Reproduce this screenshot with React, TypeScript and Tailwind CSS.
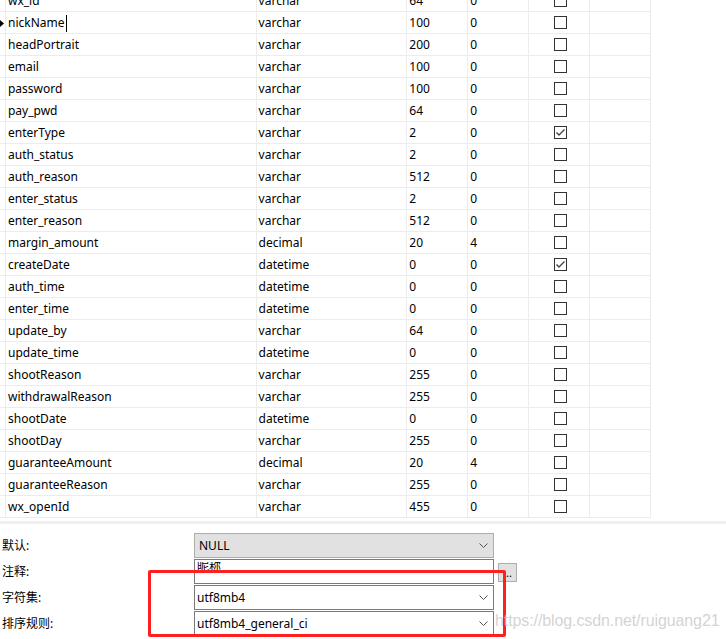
import React from "react";

interface Column {
  name: string;
  type: string;
  length: string;
  decimals: string;
  notNull?: boolean;
}

const columns: Column[] = [
  { name: "wx_id", type: "varchar", length: "64", decimals: "0" },
  { name: "nickName", type: "varchar", length: "100", decimals: "0" },
  { name: "headPortrait", type: "varchar", length: "200", decimals: "0" },
  { name: "email", type: "varchar", length: "100", decimals: "0" },
  { name: "password", type: "varchar", length: "100", decimals: "0" },
  { name: "pay_pwd", type: "varchar", length: "64", decimals: "0" },
  { name: "enterType", type: "varchar", length: "2", decimals: "0", notNull: true },
  { name: "auth_status", type: "varchar", length: "2", decimals: "0" },
  { name: "auth_reason", type: "varchar", length: "512", decimals: "0" },
  { name: "enter_status", type: "varchar", length: "2", decimals: "0" },
  { name: "enter_reason", type: "varchar", length: "512", decimals: "0" },
  { name: "margin_amount", type: "decimal", length: "20", decimals: "4" },
  { name: "createDate", type: "datetime", length: "0", decimals: "0", notNull: true },
  { name: "auth_time", type: "datetime", length: "0", decimals: "0" },
  { name: "enter_time", type: "datetime", length: "0", decimals: "0" },
  { name: "update_by", type: "varchar", length: "64", decimals: "0" },
  { name: "update_time", type: "datetime", length: "0", decimals: "0" },
  { name: "shootReason", type: "varchar", length: "255", decimals: "0" },
  { name: "withdrawalReason", type: "varchar", length: "255", decimals: "0" },
  { name: "shootDate", type: "datetime", length: "0", decimals: "0" },
  { name: "shootDay", type: "varchar", length: "255", decimals: "0" },
  { name: "guaranteeAmount", type: "decimal", length: "20", decimals: "4" },
  { name: "guaranteeReason", type: "varchar", length: "255", decimals: "0" },
  { name: "wx_openId", type: "varchar", length: "455", decimals: "0" },
];

function Checkbox({ checked }: { checked?: boolean }) {
  return (
    <div className="w-[13px] h-[13px] border border-[#333] bg-white flex items-center justify-center">
      {checked && (
        <svg width="11" height="11" viewBox="0 0 11 11">
          <polyline
            points="1.5,5.5 4,8 9.5,2.5"
            fill="none"
            stroke="#444"
            strokeWidth="1.4"
          />
        </svg>
      )}
    </div>
  );
}

function Chevron() {
  return (
    <svg width="9" height="5" viewBox="0 0 9 5" className="shrink-0">
      <polyline points="0.5,0.5 4.5,4.5 8.5,0.5" fill="none" stroke="#555" strokeWidth="1" />
    </svg>
  );
}

function Row({ col, index }: { col: Column; index: number }) {
  const active = index === 1;
  return (
    <div className="flex h-[22px] w-[651px] border-b border-[#ececec]">
      <div className="w-[6px] border-r border-[#ececec] flex items-center pt-px">
        {active && (
          <svg width="4" height="7" viewBox="0 0 4 7">
            <polygon points="0,0 4,3.5 0,7" fill="#000" />
          </svg>
        )}
      </div>
      <div className="w-[251px] border-r border-[#ececec] pl-[2px] pt-px flex items-center">
        <span>{col.name}</span>
        {active && <span className="ml-[1px] w-px h-[17px] bg-black" />}
      </div>
      <div className="w-[151px] border-r border-[#ececec] pl-[2px] pt-px flex items-center">{col.type}</div>
      <div className="w-[61px] border-r border-[#ececec] pl-[2px] pt-px flex items-center">{col.length}</div>
      <div className="w-[61px] border-r border-[#ececec] pl-[2px] pt-px flex items-center">{col.decimals}</div>
      <div className="w-[61px] border-r border-[#ececec] flex items-center justify-center pl-[2px]">
        <Checkbox checked={col.notNull} />
      </div>
      <div className="w-[61px] border-r border-[#ececec]" />
    </div>
  );
}

export default function App() {
  return (
    <div className="relative w-[726px] h-[639px] overflow-hidden bg-white text-black text-[12px] font-['Noto_Sans','Noto_Sans_CJK_SC',sans-serif]">
      <div className="-mt-[10px]">
        {columns.map((col, i) => (
          <Row key={col.name} col={col} index={i} />
        ))}
      </div>
      <div className="h-[3px]" />
      <div className="h-[3px] bg-[#f0f0f0]" />

      <div className="pt-[9px] flex flex-col gap-[1px]">
        <div className="flex items-center h-[25px]">
          <div className="w-[194px] pl-[2px]">默认:</div>
          <div className="w-[300px] h-[25px] border border-[#adadad] bg-[#e1e1e1] flex items-center justify-between pl-[4px] pr-[5px]">
            <span>NULL</span>
            <Chevron />
          </div>
        </div>
        <div className="flex items-center h-[25px]">
          <div className="w-[194px] pl-[2px]">注释:</div>
          <div className="w-[300px] h-[25px] border border-[#7a7a7a] bg-white relative overflow-hidden">
            <div className="absolute left-[2px] right-0 top-[2px] bottom-0 overflow-hidden">
              <div className="-mt-[4px] leading-[18px]">昵称</div>
            </div>
          </div>
          <div className="ml-[4px] mt-[2px] w-[19px] h-[19px] border border-[#adadad] bg-[#e1e1e1] flex items-end justify-center leading-[12px] text-[11px] pb-[2px]">
            ...
          </div>
        </div>
        <div className="flex items-center h-[25px]">
          <div className="w-[194px] pl-[2px]">字符集:</div>
          <div className="w-[300px] h-[25px] border border-[#7a7a7a] bg-white flex items-center justify-between pl-[2px] pr-[5px]">
            <span>utf8mb4</span>
            <Chevron />
          </div>
        </div>
        <div className="flex items-center h-[25px]">
          <div className="w-[194px] pl-[2px]">排序规则:</div>
          <div className="w-[300px] h-[25px] border border-[#7a7a7a] bg-white flex items-center justify-between pl-[2px] pr-[5px]">
            <span>utf8mb4_general_ci</span>
            <Chevron />
          </div>
        </div>
      </div>

      <div className="absolute left-[148px] top-[570px] w-[358px] h-[67px] border-[3px] border-[#ff1f1f] rounded-[2px]" />

      <div className="absolute left-[495px] top-[611px] text-[16px] leading-[20px] text-[#c8c8c8]/80 font-['Liberation_Sans',sans-serif] tracking-[-0.1px]">
        https://blog.csdn.net/ruiguang21
      </div>
    </div>
  );
}
